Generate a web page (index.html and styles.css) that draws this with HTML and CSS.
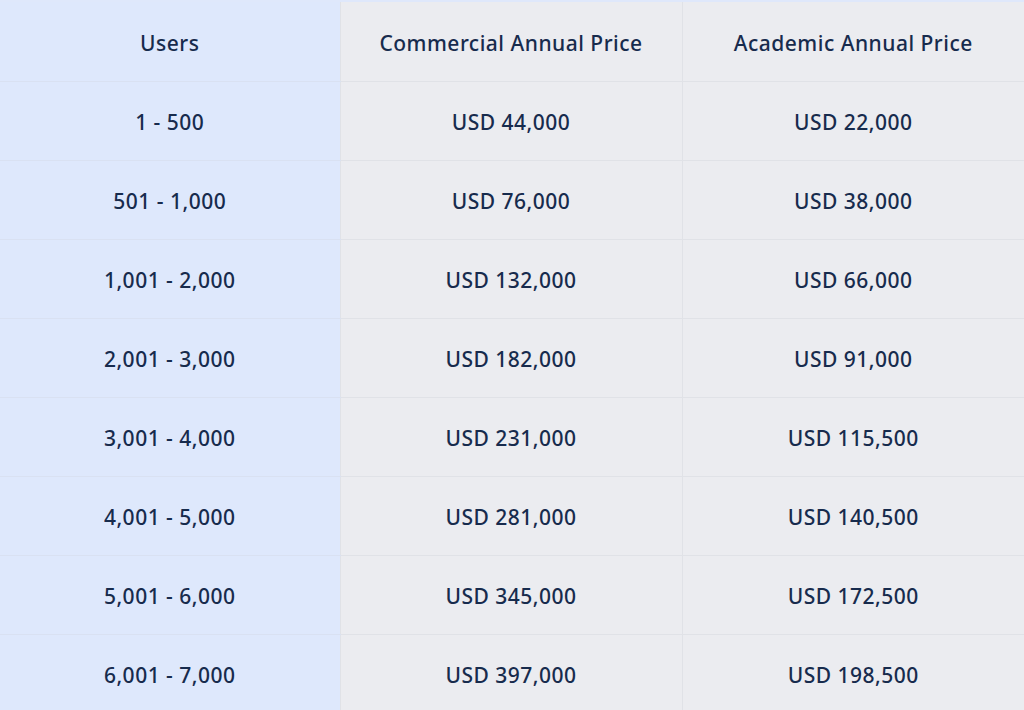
FILE: index.html
```html
<!DOCTYPE html>
<html>
<head>
<meta charset="utf-8">
<link rel="stylesheet" href="styles.css">
</head>
<body>
<div class="wrap">
<table class="prices">
  <thead>
    <tr><th class="users">Users</th><th>Commercial Annual Price</th><th>Academic Annual Price</th></tr>
  </thead>
  <tbody>
    <tr><td class="users">1 - 500</td><td>USD 44,000</td><td>USD 22,000</td></tr>
    <tr><td class="users">501 - 1,000</td><td>USD 76,000</td><td>USD 38,000</td></tr>
    <tr><td class="users">1,001 - 2,000</td><td>USD 132,000</td><td>USD 66,000</td></tr>
    <tr><td class="users">2,001 - 3,000</td><td>USD 182,000</td><td>USD 91,000</td></tr>
    <tr><td class="users">3,001 - 4,000</td><td>USD 231,000</td><td>USD 115,500</td></tr>
    <tr><td class="users">4,001 - 5,000</td><td>USD 281,000</td><td>USD 140,500</td></tr>
    <tr><td class="users">5,001 - 6,000</td><td>USD 345,000</td><td>USD 172,500</td></tr>
    <tr><td class="users">6,001 - 7,000</td><td>USD 397,000</td><td>USD 198,500</td></tr>
  </tbody>
</table>
</div>
</body>
</html>
```
FILE: styles.css
```css
html, body {
  margin: 0;
  padding: 0;
  background: #ebecf0;
}
.wrap {
  border-top: 2px solid #dfe8fb;
  overflow: hidden;
  height: 708px;
}
.prices {
  width: 1024px;
  border-collapse: collapse;
  table-layout: fixed;
  font-family: "Noto Sans", sans-serif;
  font-size: 21px;
  letter-spacing: 0.5px;
  font-weight: 500;
  color: #172b4d;
}
.prices th, .prices td {
  height: 79px;
  padding: 3px 0 0 0;
  box-sizing: border-box;
  text-align: center;
  vertical-align: middle;
  background: #ebecf0;
  border: 1px solid #e0e2e7;
  font-weight: 500;
}
.prices th:first-child, .prices td:first-child {
  width: 340px;
  border-left: none;
}
.prices th:nth-child(2), .prices td:nth-child(2) {
  width: 342px;
}
.prices th:last-child, .prices td:last-child {
  border-right: none;
}
.prices thead th {
  border-top: none;
}
.prices .users {
  background: #dee8fc;
  border-bottom-color: #d9e1f2;
}
```
